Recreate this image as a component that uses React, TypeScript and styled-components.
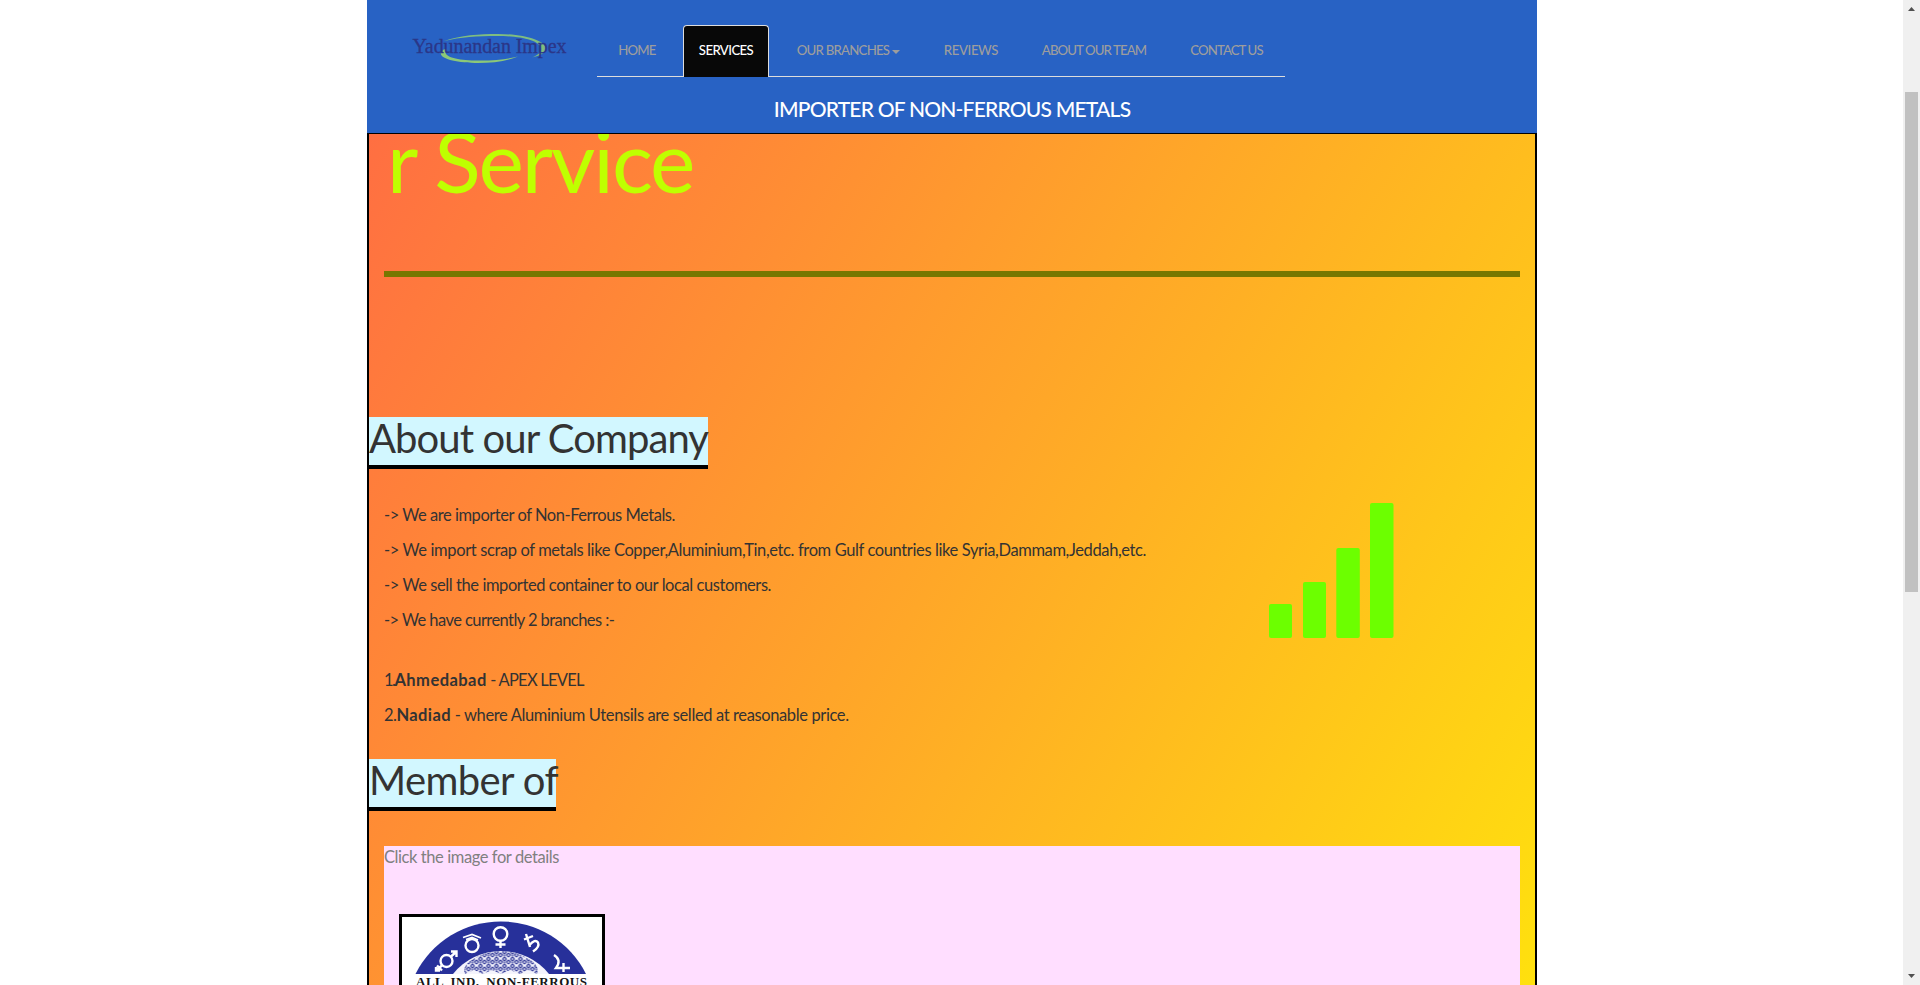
import React from 'react';
import styled, { createGlobalStyle } from 'styled-components';

const GlobalStyle = createGlobalStyle`
  * { box-sizing: border-box; }
  html, body { margin: 0; padding: 0; background: #fff; overflow: hidden; }
  body { font-family: Lato, 'Open Sans', sans-serif; color: #333; }
`;

const Window = styled.div`
  display: flex;
  height: 985px;
  overflow: hidden;
`;

const Viewport = styled.div`
  flex: 1;
  padding-left: 367px;
  overflow: hidden;
`;

const Container = styled.div`
  width: 1170px;
  height: 985px;
  display: flex;
  flex-direction: column;
`;

const Header = styled.header`
  flex: none;
  height: 134px;
  background: #2862c4;
  border-bottom: 1px solid #000;
`;

const NavBar = styled.div`
  display: flex;
  height: 77px;
  padding-left: 44px;
`;

const Logo = styled.svg`
  width: 162px;
  height: 40px;
  margin: 28px 24px 0 0;
  flex: none;
`;

const Tabs = styled.nav`
  display: flex;
  align-items: flex-end;
  gap: 12px;
  width: 688px;
  height: 77px;
  padding: 0 6px;
  border-bottom: 1px solid #ddd;
`;

const Tab = styled.a<{ $width: number; $spacing: number; $active?: boolean }>`
  display: flex;
  flex: none;
  justify-content: center;
  width: ${p => p.$width}px;
  height: 52px;
  margin-bottom: -1px;
  padding-top: ${p => (p.$active ? 14 : 15)}px;
  border: ${p => (p.$active ? '1px solid #ddd' : '0')};
  border-bottom: 0;
  border-radius: 4px 4px 0 0;
  background: ${p => (p.$active ? '#080808' : 'transparent')};
  color: ${p => (p.$active ? '#fff' : '#9d9d9d')};
  font-size: 13.2px;
  font-weight: 500;
  line-height: 20px;
  letter-spacing: ${p => p.$spacing}px;
  white-space: nowrap;
`;

const Caret = styled.span`
  width: 0;
  height: 0;
  margin: 10px 0 0 3px;
  border-top: 4px solid #9d9d9d;
  border-left: 4px solid transparent;
  border-right: 4px solid transparent;
`;

const Tagline = styled.h1`
  margin: 20px 0 0;
  text-align: center;
  color: #fff;
  font-size: 21px;
  font-weight: 500;
  line-height: 24px;
  letter-spacing: -0.78px;
`;

const Panel = styled.main`
  flex: 1;
  min-height: 0;
  overflow: hidden;
  border: solid #000;
  border-width: 0 2px;
  background: linear-gradient(to bottom right, #ff6347, #ffff00) 0 -282px / 100% 1873px no-repeat;
`;

const Hero = styled.section`
  height: 143px;
  margin: 0 15px 140px;
  overflow: hidden;
  border-bottom: 6px solid #777700;
`;

const Marquee = styled.div`
  margin-left: -109px;
  color: #bfff00;
  font-size: 86px;
  line-height: 52px;
  letter-spacing: -2.1px;
  white-space: nowrap;
`;

const Heading = styled.h2<{ $width: number; $spacing: number }>`
  width: ${p => p.$width}px;
  height: 52px;
  margin: 0;
  border-bottom: 4px solid #000;
  background: #d2f7ff;
  font-size: 40px;
  font-weight: 400;
  line-height: 42px;
  letter-spacing: ${p => p.$spacing}px;
  white-space: nowrap;
`;

const AboutRow = styled.div`
  display: flex;
  margin: 29px 15px 26px;
`;

const Facts = styled.div`
  width: 885px;
`;

const Branches = styled.div`
  margin-top: 25px;
`;

const Line = styled.p<{ $spacing?: number }>`
  margin: 0;
  font-size: 16.5px;
  line-height: 35px;
  letter-spacing: ${p => p.$spacing ?? 0}px;
  white-space: pre;
`;

const Run = styled.span<{ $spacing: number; $bold?: boolean }>`
  font-weight: ${p => (p.$bold ? 700 : 400)};
  letter-spacing: ${p => p.$spacing}px;
`;

const SignalIcon = styled.svg`
  width: 126px;
  height: 136px;
  margin-top: 4px;
  fill: #6cff00;
`;

const MemberCard = styled.section`
  height: 400px;
  margin: 35px 15px 0;
  background: #ffdeff;
`;

const Hint = styled.p`
  margin: 0 0 45px;
  color: #808080;
  font-size: 16.5px;
  line-height: 23px;
  letter-spacing: -0.42px;
`;

const Emblem = styled.svg`
  display: block;
  width: 206px;
  height: 206px;
  margin-left: 15px;
  border: 3px solid #000;
  background: #fff;
`;

const ScrollTrack = styled.div`
  display: flex;
  flex-direction: column;
  align-items: center;
  width: 17px;
  height: 985px;
  background: #f0f0f0;
`;

const ScrollThumb = styled.div`
  width: 13px;
  height: 500px;
  margin: 75px 0 376px;
  background: #c1c1c1;
`;

const Arrow = styled.svg`
  width: 17px;
  height: 17px;
  flex: none;
  fill: #505050;
`;

const tabs = [
  { label: 'HOME', width: 68, spacing: -0.8 },
  { label: 'SERVICES', width: 86, spacing: -0.6, active: true },
  { label: 'OUR BRANCHES', width: 135, spacing: -0.76, caret: true },
  { label: 'REVIEWS', width: 86, spacing: -0.4 },
  { label: 'ABOUT OUR TEAM', width: 136, spacing: -0.9 },
  { label: 'CONTACT US', width: 105, spacing: -0.9 },
];

const facts = [
  { text: '-> We are importer of Non-Ferrous Metals.', spacing: -0.46 },
  {
    text: '-> We import scrap of metals like Copper,Aluminium,Tin,etc. from Gulf countries like Syria,Dammam,Jeddah,etc.',
    spacing: -0.38,
  },
  { text: '-> We sell the imported container to our local customers.', spacing: -0.42 },
  { text: '-> We have currently 2 branches :-', spacing: -0.57 },
];

function CompanyLogo() {
  return (
    <Logo viewBox="0 0 162 40">
      <path
        d="M33 13C50 7 68 6 87 6C113 6 136 13 134.500 21C134 25 129 28 121 29.500C127 27 131 24 130 20C128 12 108 8 86 8C66 8 50 9 33 13Z"
        fill="#7fbd80"
      />
      <path
        d="M36 21C30 28 43 32 64 32.500C82 33 97 31 107 28.500C96 33 80 35.300 64 35C42 34.500 28 30 30 24.500C31 22 33 21 36 21Z"
        fill="#8cc878"
      />
      <text
        x="1.500"
        y="25"
        textLength="154"
        fontFamily="'Liberation Serif', serif"
        fontSize="20"
        fill="#2b3688"
        stroke="#2b3688"
        strokeWidth="0.3"
      >
        Yadunandan Impex
      </text>
    </Logo>
  );
}

function MemberEmblem() {
  return (
    <Emblem viewBox="0 0 200 200">
      <defs>
        <pattern id="lace" width="8" height="7" patternUnits="userSpaceOnUse" x="2.500">
          <path
            d="M0 1L2 3L0 5M8 1L6 3L8 5M2 0L4 2L6 0M2 7L4 5L6 7M4 3V4"
            stroke="#3d449e"
            strokeWidth="1.300"
            fill="none"
          />
        </pattern>
      </defs>
      <path d="M13.500 57A95.400 95.400 0 0 1 184 57Z" fill="#27309a" />
      <path d="M51 57A61.600 61.600 0 0 1 147 57Z" fill="#f4f4fc" />
      <path d="M63 57Q60 50 68 44Q83 34 99 34Q115 34 130 44Q138 50 135 57L126 53L118 57L108 53L99 57L90 53L81 57L72 53Z" fill="url(#lace)" />
      <g fill="none" stroke="#fff" strokeWidth="2.400">
        <circle cx="44.500" cy="44" r="6" />
        <path d="M49 39.500L54 35M49 34.500H54.500V40M40 48.500L34 53.500M35 48.500L40 53.500M34 50V53.500H38" />
        <circle cx="70" cy="28.500" r="6.500" />
        <path d="M61 20.500L70 17.500L79 21M64 22.500L70 20.500L76 23" strokeWidth="1.800" />
        <circle cx="98.500" cy="17" r="6.800" />
        <path d="M98.500 24V31M93.500 27.500H103.500" />
        <path d="M124 17L128 30M122 22.500L131 19M127.500 28Q133 21.500 136 25.500Q138 30 131 34.500" />
        <path d="M152 38Q160 43 154 51H168M161.500 46V55" />
      </g>
      <text
        x="14"
        y="69"
        textLength="171"
        fontFamily="'Liberation Serif', serif"
        fontSize="13"
        fontWeight="700"
        wordSpacing="3"
        fill="#151515"
      >
        ALL IND. NON-FERROUS
      </text>
    </Emblem>
  );
}

export default function App() {
  return (
    <Window>
      <GlobalStyle />
      <Viewport>
        <Container>
          <Header>
            <NavBar>
              <CompanyLogo />
              <Tabs>
                {tabs.map(tab => (
                  <Tab key={tab.label} $width={tab.width} $spacing={tab.spacing} $active={tab.active}>
                    {tab.label}
                    {tab.caret && <Caret />}
                  </Tab>
                ))}
              </Tabs>
            </NavBar>
            <Tagline>IMPORTER OF NON-FERROUS METALS</Tagline>
          </Header>
          <Panel>
            <Hero>
              <Marquee>Our Service</Marquee>
            </Hero>
            <Heading $width={339} $spacing={-0.91}>About our Company</Heading>
            <AboutRow>
              <Facts>
                {facts.map(fact => (
                  <Line key={fact.text} $spacing={fact.spacing}>{fact.text}</Line>
                ))}
                <Branches>
                  <Line>
                    <Run $spacing={-1.5}>1.</Run>
                    <Run $spacing={0.45} $bold>Ahmedabad</Run>
                    <Run $spacing={-0.75}> - APEX LEVEL</Run>
                  </Line>
                  <Line>
                    <Run $spacing={-0.5}>2.</Run>
                    <Run $spacing={0.38} $bold>Nadiad</Run>
                    <Run $spacing={-0.38}> - where Aluminium Utensils are selled at reasonable price.</Run>
                  </Line>
                </Branches>
              </Facts>
              <SignalIcon viewBox="0 0 126 136">
                <rect x="0" y="102" width="23" height="34" rx="2" />
                <rect x="34" y="80" width="23" height="56" rx="2" />
                <rect x="67.300" y="46" width="23.500" height="90" rx="2" />
                <rect x="101" y="1" width="23.500" height="135" rx="2" />
              </SignalIcon>
            </AboutRow>
            <Heading $width={187} $spacing={-0.6}>Member of</Heading>
            <MemberCard>
              <Hint>Click the image for details</Hint>
              <MemberEmblem />
            </MemberCard>
          </Panel>
        </Container>
      </Viewport>
      <ScrollTrack>
        <Arrow viewBox="0 0 17 17"><path d="M5 11L8.500 7L12 11Z" /></Arrow>
        <ScrollThumb />
        <Arrow viewBox="0 0 17 17"><path d="M5 6L8.500 10L12 6Z" /></Arrow>
      </ScrollTrack>
    </Window>
  );
}
